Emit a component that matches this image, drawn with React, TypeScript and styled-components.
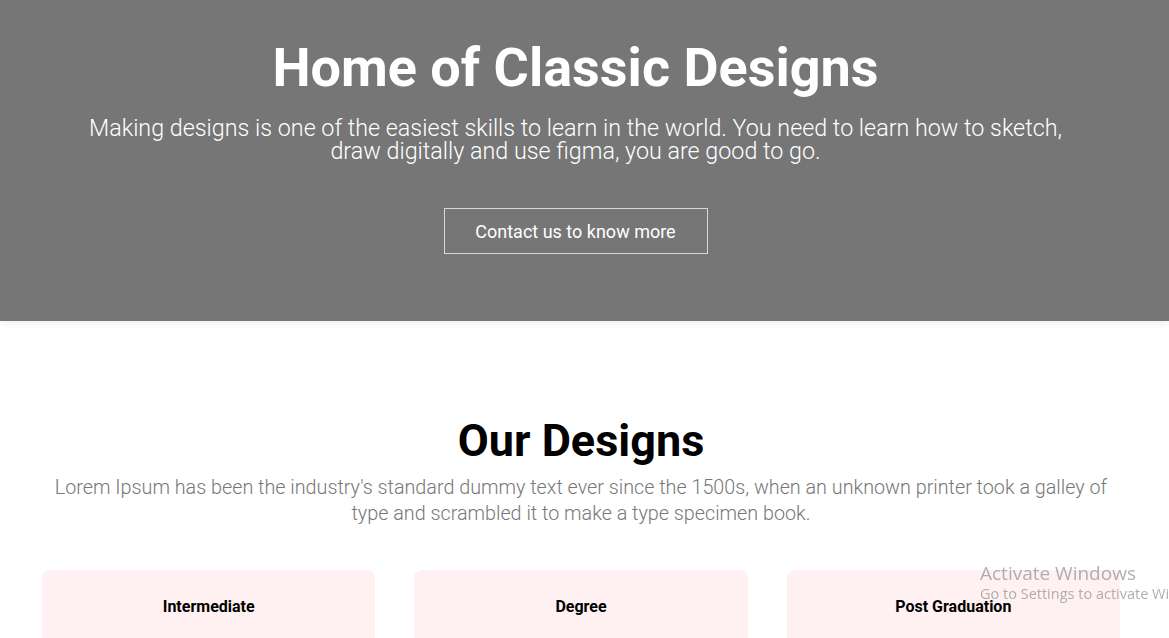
import React from "react";
import styled, { createGlobalStyle } from "styled-components";

const Global = createGlobalStyle`
  html, body { margin: 0; padding: 0; background: #fff; }
  body { font-family: Roboto, "Liberation Sans", sans-serif; overflow: hidden; }
`;

const Hero = styled.header`
  background: #767676;
  height: 321px;
  display: flex;
  flex-direction: column;
  align-items: center;
  padding: 36px 18px 0 0;
  box-sizing: border-box;
  box-shadow: 0 2px 8px rgba(0, 0, 0, 0.08);
  position: relative;
  z-index: 1;
`;

const HeroTitle = styled.h1`
  margin: 0;
  color: #fff;
  font-weight: 700;
  font-size: 54px;
  line-height: 64px;
`;

const HeroText = styled.p`
  margin: 17px 0 0;
  max-width: 1000px;
  color: #fff;
  font-weight: 300;
  font-size: 23.3px;
  line-height: 23px;
  text-align: center;
`;

const OutlineButton = styled.button`
  margin-top: 45px;
  width: 264px;
  height: 46px;
  background: transparent;
  border: 1.5px solid #d8d8d8;
  color: #fff;
  font-family: Roboto, "Liberation Sans", sans-serif;
  font-size: 18px;
  font-weight: 400;
  cursor: pointer;
`;

const Section = styled.section`
  padding: 92px 49px 0 42px;
  display: flex;
  flex-direction: column;
  align-items: center;
`;

const SectionTitle = styled.h2`
  margin: 0;
  color: #000;
  font-weight: 700;
  font-size: 45px;
  line-height: 56px;
`;

const SectionText = styled.p`
  margin: 6px 0 0;
  color: #777;
  font-weight: 300;
  font-size: 19.75px;
  line-height: 26px;
  text-align: center;
`;

const Cards = styled.div`
  margin-top: 43px;
  width: 100%;
  display: grid;
  grid-template-columns: repeat(3, 1fr);
  gap: 39px;
`;

const Card = styled.div`
  background: #fff1f1;
  border-radius: 8px;
  height: 120px;
  display: flex;
  justify-content: center;
  padding-top: 27px;
  box-sizing: border-box;
`;

const CardTitle = styled.h3`
  margin: 0;
  font-size: 16px;
  font-weight: 700;
  color: #000;
  line-height: 20px;
`;

const Watermark = styled.div`
  position: fixed;
  left: 980px;
  top: 562px;
  color: rgba(150, 150, 150, 0.75);
  font-family: "Open Sans", "Noto Sans", sans-serif;
  white-space: nowrap;
  pointer-events: none;
  z-index: 5;
`;

const WmTitle = styled.div`
  font-size: 19px;
  line-height: 22px;
`;

const WmSub = styled.div`
  font-size: 14.5px;
  line-height: 20px;
`;

export default function App() {
  return (
    <>
      <Global />
      <Hero>
        <HeroTitle>Home of Classic Designs</HeroTitle>
        <HeroText>
          Making designs is one of the easiest skills to learn in the world. You need to learn how to sketch,
          draw digitally and use figma, you are good to go.
        </HeroText>
        <OutlineButton>Contact us to know more</OutlineButton>
      </Hero>
      <Section>
        <SectionTitle>Our Designs</SectionTitle>
        <SectionText>
          Lorem Ipsum has been the industry's standard dummy text ever since the 1500s, when an unknown printer took a galley of
          type and scrambled it to make a type specimen book.
        </SectionText>
        <Cards>
          <Card><CardTitle>Intermediate</CardTitle></Card>
          <Card><CardTitle>Degree</CardTitle></Card>
          <Card><CardTitle>Post Graduation</CardTitle></Card>
        </Cards>
      </Section>
      <Watermark>
        <WmTitle>Activate Windows</WmTitle>
        <WmSub>Go to Settings to activate Windows.</WmSub>
      </Watermark>
    </>
  );
}
